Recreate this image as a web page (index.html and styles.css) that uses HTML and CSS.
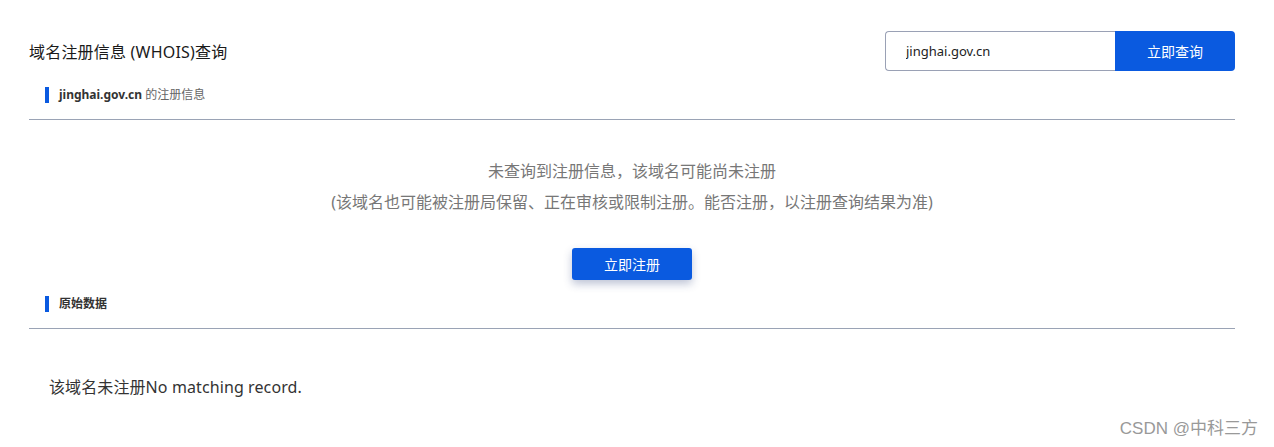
FILE: index.html
```html
<!DOCTYPE html>
<html>
<head>
    <title>域名注册信息 (WHOIS)查询</title>
    <link rel="stylesheet" href="styles.css">
</head>
<body>
    <div class="whois-page">
        <div class="whois-header">
            <h1 class="whois-title">域名注册信息 (WHOIS)查询</h1>
            <form class="search-box" onsubmit="return false">
                <input class="search-input" type="text" value="jinghai.gov.cn">
                <button class="search-button" type="submit">立即查询</button>
            </form>
        </div>

        <div class="section-title">
            <strong>jinghai.gov.cn</strong> <span>的注册信息</span>
        </div>
        <div class="divider"></div>

        <div class="result-empty">
            <p>未查询到注册信息，该域名可能尚未注册</p>
            <p>(该域名也可能被注册局保留、正在审核或限制注册。能否注册，以注册查询结果为准)</p>
            <button class="register-button">立即注册</button>
        </div>

        <div class="section-title">
            <strong class="raw-title">原始数据</strong>
        </div>
        <div class="divider"></div>

        <div class="raw-data">该域名未注册No matching record.</div>
    </div>

    <div class="watermark">CSDN @中科三方</div>
</body>
</html>
```

FILE: styles.css
```css
body {
    margin: 0;
    background: #fff;
    color: #222;
    font-family: "Noto Sans", "Noto Sans CJK SC", sans-serif;
}

.whois-page {
    padding: 31px 39px 0 29px;
}

.whois-header {
    display: flex;
    justify-content: space-between;
    align-items: center;
    height: 40px;
}

.whois-title {
    margin: 0;
    font-size: 16px;
    font-weight: normal;
    color: #1a1a1a;
    letter-spacing: 0.2px;
}

.search-box {
    display: flex;
    margin: 0;
    height: 40px;
}

.search-input {
    box-sizing: border-box;
    width: 230px;
    height: 40px;
    padding: 0 20px;
    border: 1px solid #9aa1b5;
    border-right: none;
    border-radius: 4px 0 0 4px;
    font-family: inherit;
    font-size: 13px;
    color: #222;
    outline: none;
}

.search-button {
    width: 120px;
    height: 40px;
    border: none;
    border-radius: 0 4px 4px 0;
    background: #0a5ae0;
    color: #fff;
    font-family: inherit;
    font-size: 14px;
    cursor: pointer;
}

.section-title {
    margin: 16px 0 0 16px;
    padding-left: 10px;
    border-left: 4px solid #0a5ae0;
    height: 16px;
    line-height: 16px;
    font-size: 12px;
    color: #666;
}

.section-title strong {
    font-size: 12px;
    color: #333;
}

.divider {
    margin-top: 16px;
    height: 1px;
    background: #9aa3b5;
}

.result-empty {
    margin-top: 36px;
    text-align: center;
    font-size: 16px;
    color: #777;
}

.result-empty p {
    margin: 0;
    line-height: 31px;
}

.register-button {
    margin-top: 30px;
    width: 120px;
    height: 32px;
    border: none;
    border-radius: 3px;
    background: #0a5ae0;
    color: #fff;
    font-family: inherit;
    font-size: 14px;
    box-shadow: 0 4px 8px rgba(40, 60, 120, 0.3);
    cursor: pointer;
}

.raw-data {
    margin: 46px 0 0 20px;
    line-height: 24px;
    font-size: 16px;
    color: #333;
    letter-spacing: 0.1px;
}

.watermark {
    position: absolute;
    right: 16px;
    bottom: 8px;
    font-family: "Liberation Sans", "Noto Sans CJK SC", sans-serif;
    font-size: 17px;
    color: #999;
}
```
